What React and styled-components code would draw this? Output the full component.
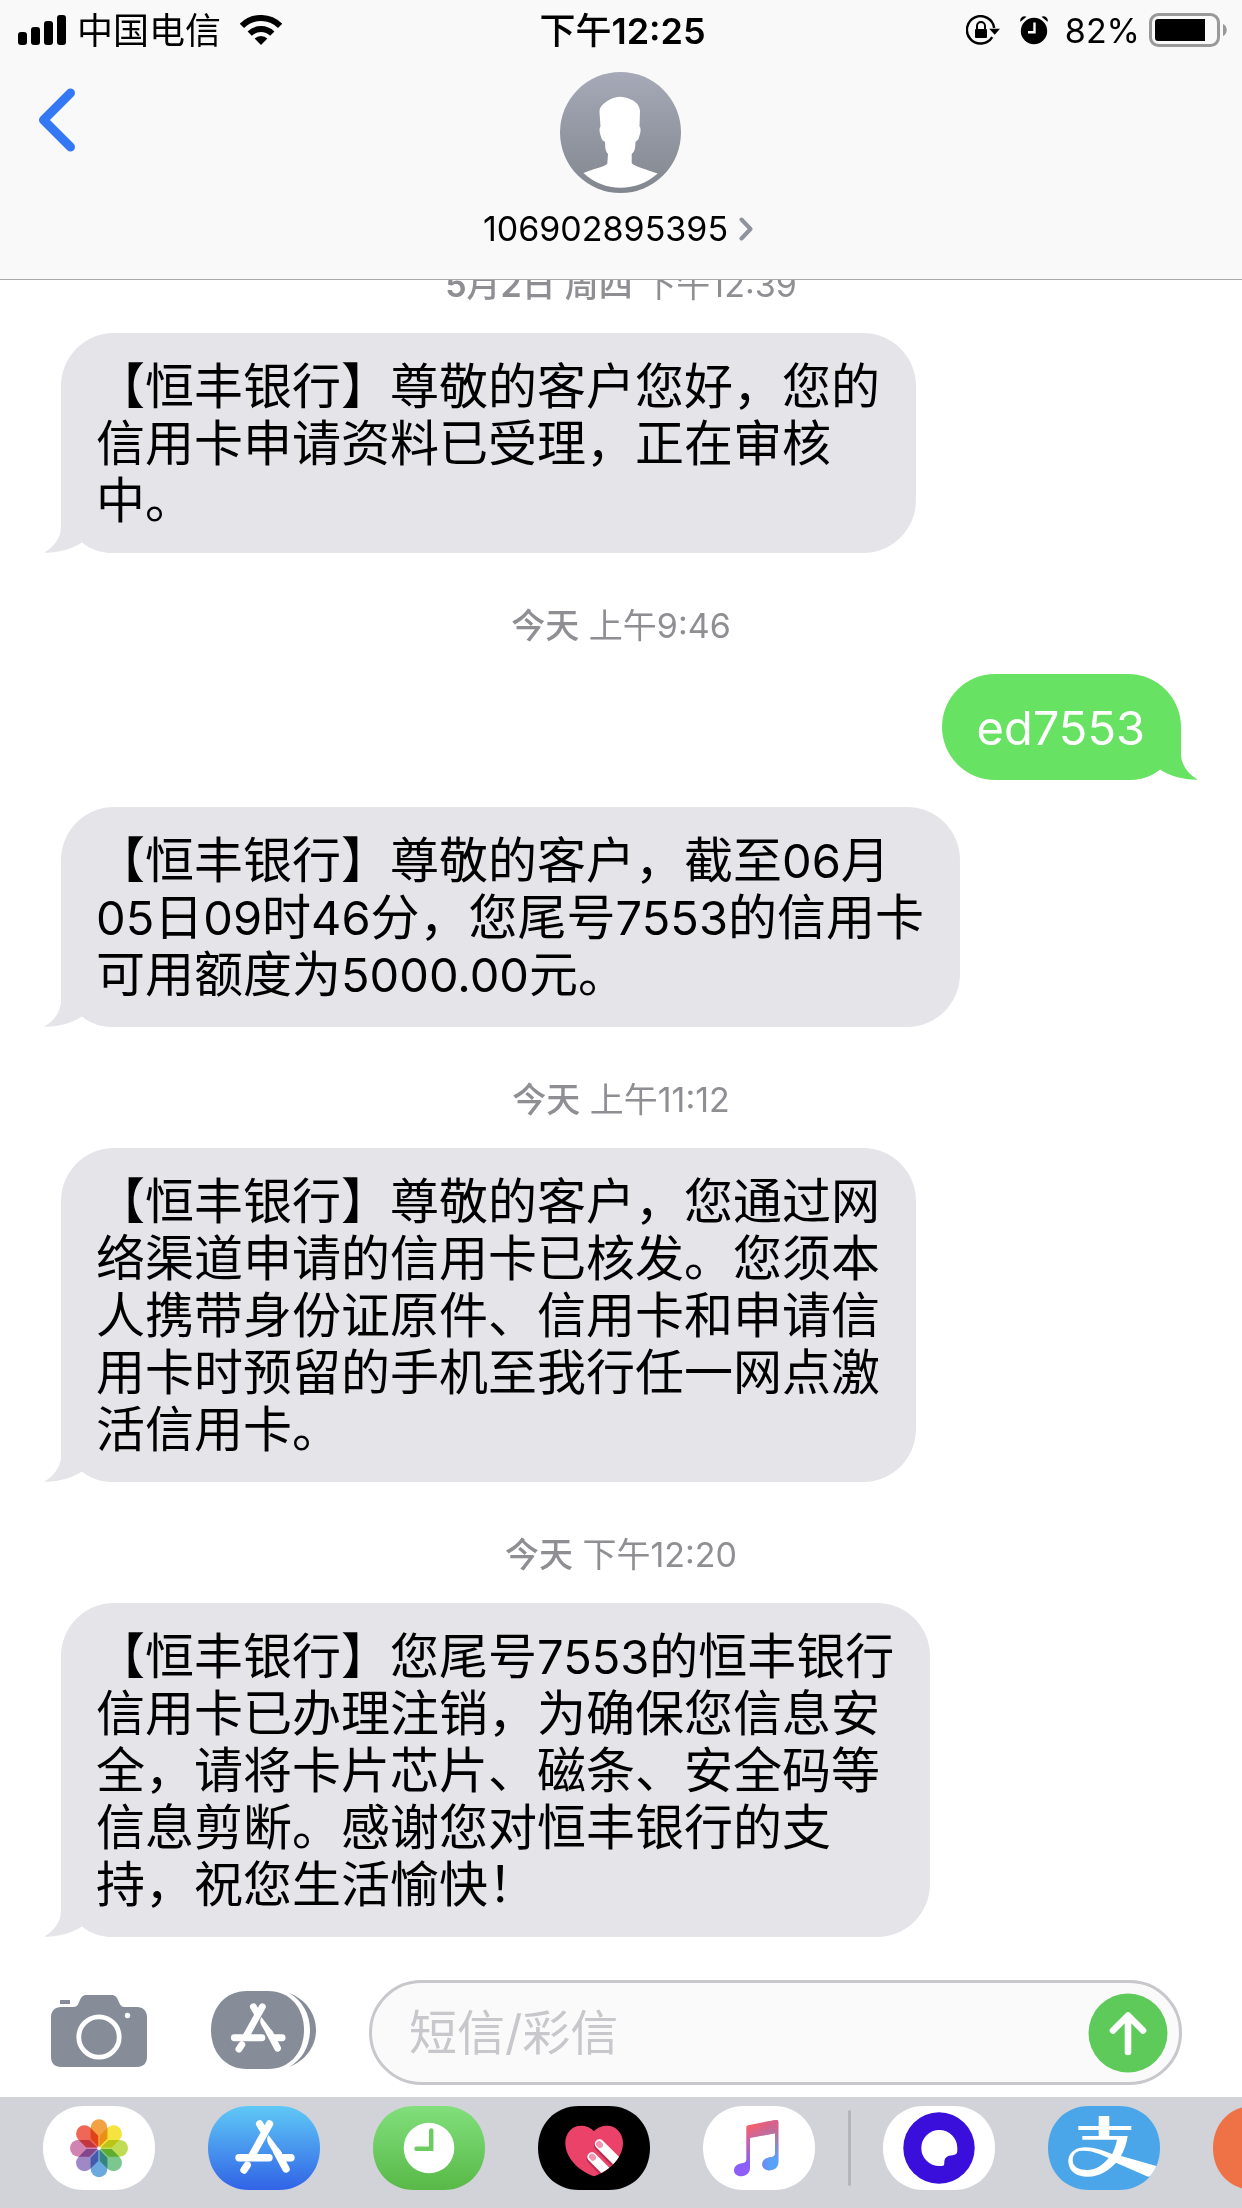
import React, { useState } from "react";
import styled, { createGlobalStyle } from "styled-components";

const items = [
  { type: "time", day: "5月2日 周四", time: "下午12:39" },
  {
    type: "in",
    lines: ["【恒丰银行】尊敬的客户您好，您的", "信用卡申请资料已受理，正在审核", "中。"],
  },
  { type: "time", day: "今天", time: "上午9:46" },
  { type: "out", lines: ["ed7553"] },
  {
    type: "in",
    lines: ["【恒丰银行】尊敬的客户，截至06月", "05日09时46分，您尾号7553的信用卡", "可用额度为5000.00元。"],
  },
  { type: "time", day: "今天", time: "上午11:12" },
  {
    type: "in",
    lines: [
      "【恒丰银行】尊敬的客户，您通过网",
      "络渠道申请的信用卡已核发。您须本",
      "人携带身份证原件、信用卡和申请信",
      "用卡时预留的手机至我行任一网点激",
      "活信用卡。",
    ],
  },
  { type: "time", day: "今天", time: "下午12:20" },
  {
    type: "in",
    lines: [
      "【恒丰银行】您尾号7553的恒丰银行",
      "信用卡已办理注销，为确保您信息安",
      "全，请将卡片芯片、磁条、安全码等",
      "信息剪断。感谢您对恒丰银行的支",
      "持，祝您生活愉快！",
    ],
  },
];

const GlobalStyle = createGlobalStyle`
  * { box-sizing: border-box; }
  body {
    margin: 0;
    background: #fff;
    color: #000;
    font-family: Inter, "Noto Sans CJK SC", sans-serif;
    text-spacing-trim: space-all;
  }
  button, input { font: inherit; color: inherit; }
  svg { display: block; flex: none; }
`;

const Screen = styled.div`
  display: flex;
  flex-direction: column;
  height: 100vh;
`;

const Header = styled.header`
  flex: none;
  background: #f9f9f9;
  border-bottom: 1px solid #a9a9ac;
  padding-bottom: 29px;
`;

const StatusBar = styled.div`
  display: grid;
  grid-template-columns: 1fr auto 1fr;
  align-items: center;
  height: 60px;
  padding: 0 15px 0 18px;
`;

const StatusSide = styled.div`
  display: flex;
  align-items: center;
  justify-content: ${(p) => (p.$end ? "flex-end" : "flex-start")};
  gap: ${(p) => (p.$end ? 9 : 11)}px;
`;

const StatusText = styled.span`
  padding-top: 2px;
  font-size: ${(p) => (p.$small ? 34 : 36)}px;
  line-height: 44px;
  font-weight: ${(p) => (p.$strong ? 500 : 400)};
`;

const Carrier = styled(StatusText)`
  margin-right: 8px;
`;

const StatusIcons = styled.span`
  display: flex;
  gap: 20px;
  margin-right: 8px;
`;

// digits and latin letters inside chinese text
const Latin = styled.span`
  font-size: ${(p) => (p.$size ? p.$size + "px" : "inherit")};
  font-weight: ${(p) => p.$weight || "inherit"};
`;

const Nav = styled.nav`
  display: grid;
  grid-template-columns: 1fr auto 1fr;
  align-items: start;
  padding: 12px 36px 0;
`;

const IconButton = styled.button`
  display: flex;
  flex: none;
  width: max-content;
  padding: 0;
  border: 0;
  background: none;
  cursor: pointer;
`;

const BackButton = styled(IconButton)`
  margin-top: 16px;
`;

const Contact = styled(IconButton)`
  flex-direction: column;
  align-items: center;
  gap: 15px;
`;

const ContactName = styled.span`
  display: flex;
  align-items: center;
  gap: 11px;
  padding-right: 6px;
  font-size: 34px;
  line-height: 42px;
`;

const Messages = styled.main`
  flex: 1;
  min-height: 0;
  display: flex;
  flex-direction: column;
  justify-content: flex-end;
  overflow: hidden;
  padding: 0 61px 26px;
`;

const TimeLabel = styled.div`
  flex: none;
  padding: 51px 0 26px;
  color: #8e8e93;
  font-size: 34px;
  line-height: 44px;
  text-align: center;
`;

const Day = styled.span`
  font-weight: 500;
`;

const Bubble = styled.div`
  position: relative;
  isolation: isolate;
  flex: none;
  align-self: ${(p) => (p.$out ? "flex-end" : "flex-start")};
  padding: 25px 36px 24px 35px;
  border-radius: 53px;
  background: ${(p) => (p.$out ? "#68e263" : "#e5e4e9")};
  color: ${(p) => (p.$out ? "#fff" : "#000")};
  font-size: 49px;
  line-height: 57px;
  white-space: pre;

  & + & {
    margin-top: 27px;
  }
`;

const Tail = styled.svg`
  position: absolute;
  z-index: -1;
  bottom: 0;
  ${(p) => (p.$out ? "right: -17px; transform: scaleX(-1);" : "left: -17px;")}
  fill: ${(p) => (p.$out ? "#68e263" : "#e5e4e9")};
`;

const Composer = styled.form`
  flex: none;
  display: flex;
  align-items: center;
  padding: 17px 60px 12px 51px;
`;

const ComposerButton = styled(IconButton)`
  margin-bottom: 4px;
`;

const AppsButton = styled(ComposerButton)`
  margin-left: 64px;
  margin-right: 53px;
`;

const Field = styled.div`
  flex: 1;
  min-width: 0;
  display: flex;
  align-items: center;
  height: 105px;
  padding: 0 11px 0 37px;
  border: 3px solid #c7c7cc;
  border-radius: 53px;
  background: #fafafa;
`;

const TextInput = styled.input`
  flex: 1;
  min-width: 0;
  padding: 0;
  border: 0;
  outline: 0;
  background: none;
  font-size: 48px;
  line-height: 60px;

  &::placeholder {
    color: #c7c7cc;
    opacity: 1;
  }
`;

const Dock = styled.footer`
  flex: none;
  display: flex;
  align-items: center;
  gap: 53px;
  overflow: hidden;
  padding: 9px 0 18px 43px;
  background: #d1d3d9;
`;

const Divider = styled.span`
  flex: none;
  width: 3px;
  height: 76px;
  margin: 0 -21px 0 -20px;
  border-radius: 2px;
  background: #b4b5ba;
`;

const PILL = "M41 0H71C95 0 112 18 112 42S95 84 71 84H41C17 84 0 66 0 42S17 0 41 0Z";

const SignalIcon = () => (
  <svg width="48" height="30" viewBox="0 0 48 30">
    <rect x="0" y="17" width="9" height="13" rx="3" />
    <rect x="13" y="12" width="9" height="18" rx="3" />
    <rect x="26" y="6" width="9" height="24" rx="3" />
    <rect x="39" y="0" width="9" height="30" rx="3" />
  </svg>
);

const WifiIcon = () => (
  <svg width="42" height="30" viewBox="0 0 42 30">
    <path d="M1.9 10.9A27 27 0 0 1 40.1 10.9M9.7 18.7A16 16 0 0 1 32.3 18.7" fill="none" stroke="#000" strokeWidth="6" />
    <path d="M21 30L14.6 23.6A9 9 0 0 1 27.4 23.6Z" />
  </svg>
);

const LockIcon = () => (
  <svg width="34" height="30" viewBox="0 0 34 30">
    <path d="M26.2 22.2A13.7 13.7 0 1 1 28.2 13" fill="none" stroke="#000" strokeWidth="2.4" />
    <path d="M23.2 13.8H34L28.7 19.8Z" />
    <rect x="9" y="14" width="12" height="9" rx="1" />
    <path d="M11 15V11A4 4 0 0 1 19 11V15" fill="none" stroke="#000" strokeWidth="2" />
  </svg>
);

const AlarmIcon = () => (
  <svg width="28" height="30" viewBox="0 0 28 30">
    <circle cx="14" cy="16" r="13.2" />
    <path d="M.5 6.8C-1 3 3.5 0 6.5 1.8ZM27.5 6.8C29 3 24.5 0 21.5 1.8Z" />
    <path d="M14.5 7.5V17.2H8" fill="none" stroke="#f9f9f9" strokeWidth="2.4" />
  </svg>
);

const BatteryIcon = () => (
  <svg width="78" height="34" viewBox="0 0 78 34">
    <rect x="1.5" y="1.5" width="68" height="31" rx="8" fill="none" stroke="#999" strokeWidth="3" />
    <path d="M9 6H56V28H9A3 3 0 0 1 6 25V9A3 3 0 0 1 9 6Z" />
    <path d="M74 11C79 13 79 21 74 23Z" fill="#999" />
  </svg>
);

const BackIcon = () => (
  <svg width="41" height="64" viewBox="0 0 41 64">
    <path d="M34.5 5L7.500 32L34.5 59" fill="none" stroke="#3478f6" strokeWidth="9" strokeLinecap="round" strokeLinejoin="round" />
  </svg>
);

const Avatar = () => (
  <svg width="121" height="121" viewBox="0 0 121 121">
    <defs>
      <linearGradient id="avatar" x1="0" y1="0" x2="0" y2="1">
        <stop offset="0" stopColor="#a6a9b7" />
        <stop offset="1" stopColor="#82878f" />
      </linearGradient>
    </defs>
    <circle cx="60.5" cy="60.5" r="60.5" fill="url(#avatar)" />
    <path
      fill="#fff"
      d="M60.5 24.7C65 24.9 70 26.5 73 28.5C77.5 31 79.7 35 80 39L79.5 54.5C81.5 56.5 80.5 61 78.5 67C77.5 69 76 68.5 75.5 70C75.3 74 75.5 79 71.7 82V91C73.5 94 85 97 97.7 101.5C87 111 74 115.7 60.5 115.7S34 111 23.5 101C36 96 46 94.5 47.3 91.5L48 82C44.5 78 45.5 74 45 70C44 68.5 43 69.5 42 67.5C40 62 38.5 57 40.5 54.5L39.5 40C39.3 35 43 31.5 49 28C52 26 56.5 24.6 60.5 24.7Z"
    />
  </svg>
);

const ChevronIcon = () => (
  <svg width="14" height="24" viewBox="0 0 14 24">
    <path d="M2.5 2.5L11.5 12L2.5 21.5" fill="none" stroke="#8e939d" strokeWidth="4" strokeLinecap="round" strokeLinejoin="round" />
  </svg>
);

const CameraIcon = () => (
  <svg width="96" height="72" viewBox="0 0 96 72">
    <g fill="#868d99">
      <path d="M10 12H22C27 12 27 9 29 5C30.5 1.5 32 0 36 0H60C64 0 65.5 1.5 67 5C69 9 69.5 12 73.5 12H86C92 12 96 16 96 22V62C96 68.5 92 72 86 72H10C4 72 0 68.5 0 62V22C0 16 4 12 10 12Z" />
      <rect x="9" y="5" width="10" height="4" />
    </g>
    <circle cx="48" cy="42" r="20.2" fill="none" stroke="#fff" strokeWidth="4.8" />
    <circle cx="76.5" cy="20.5" r="2.7" fill="#fff" />
  </svg>
);

const AppStoreMark = () => (
  <g fill="none" stroke="#fff" strokeWidth="7.4" strokeLinecap="round">
    <path d="M61.5 18L44 49.5M51.7 18L55.5 24.5M39.2 59.2L36 64" />
    <path d="M31 51.7H61M74 51.7H83" />
    <path d="M69 46L78 63" />
    <path d="M60.5 29C58.5 32 58.8 35 60.5 38.3L68 51L74 47Z" fill="#fff" stroke="none" />
  </g>
);

const AppsIcon = () => (
  <svg width="105" height="79" viewBox="0 0 105 79">
    <g fill="#868d99">
      <path d="M36 0H57C79 0 93 17 93 39S79 78 57 78H36C14 78 0 61 0 39S14 0 36 0Z" />
      <path d="M78 2C94 8 105 22 105 39S94 70 78 76C91 69 99 55 99 39S91 9 78 2Z" />
    </g>
    <g transform="translate(-5.2 -.8) scale(.92)">
      <AppStoreMark />
    </g>
  </svg>
);

const SendIcon = () => (
  <svg width="80" height="80" viewBox="0 0 80 80">
    <circle cx="40" cy="40" r="39.5" fill="#5dca5a" />
    <path d="M40 59V23M25 37.5L40 22.5L55 37.5" fill="none" stroke="#fff" strokeWidth="6.6" strokeLinecap="round" strokeLinejoin="round" />
  </svg>
);

const AppIcon = ({ children, ...props }) => (
  <svg width="112" height="84" viewBox="0 0 112 84">
    <path d={PILL} {...props} />
    {children}
  </svg>
);

const petals = ["#f2a143", "#f6e340", "#c0dc55", "#7cc78f", "#6ca9de", "#9f88c6", "#d184b2", "#ee6757"];

const Petal = styled.path`
  mix-blend-mode: multiply;
`;

const PhotosIcon = () => (
  <AppIcon fill="#fff">
    <g transform="translate(56 42.3)">
      {petals.map((color, i) => (
        <Petal
          key={color}
          d="M0 -1L-8.4 -9.5V-20.6A8.4 8.4 0 0 1 8.4 -20.6V-9.5Z"
          fill={color}
          transform={`rotate(${i * 45})`}
        />
      ))}
    </g>
    <circle cx="56" cy="42.3" r="1.8" fill="#fff" />
  </AppIcon>
);

const StoreIcon = () => (
  <AppIcon fill="url(#store)">
    <defs>
      <linearGradient id="store" x1="0" y1="0" x2="0" y2="1">
        <stop offset="0" stopColor="#5fc9f6" />
        <stop offset="1" stopColor="#3163e6" />
      </linearGradient>
    </defs>
    <AppStoreMark />
  </AppIcon>
);

const RecentIcon = () => (
  <AppIcon fill="url(#recent)">
    <defs>
      <linearGradient id="recent" x1="0" y1="0" x2="0" y2="1">
        <stop offset="0" stopColor="#82df7c" />
        <stop offset="1" stopColor="#58b947" />
      </linearGradient>
    </defs>
    <circle cx="56" cy="42" r="25.3" fill="#fff" />
    <path d="M58.2 24.5V42.8H43.5" fill="none" stroke="#6ccc62" strokeWidth="4.5" strokeLinecap="round" />
  </AppIcon>
);

const HEART =
  "M56 25.3C60 21 64 19.7 69 19.7C78 19.7 85 27 85 37C85 52 71 65 56 70.3C41 65 27.3 52 27.3 37C27.3 27 34 19.7 43 19.7C48 19.7 52 21 56 25.3Z";

const TouchIcon = () => (
  <AppIcon fill="#000">
    <clipPath id="heart">
      <path d={HEART} />
    </clipPath>
    <path d={HEART} fill="#eb4269" />
    <g clipPath="url(#heart)" fill="none" strokeLinecap="round">
      <path d="M60.5 40L84 64M53 53L74 75" stroke="#b92d50" strokeWidth="9" />
      <path d="M61.5 38L86 62.5M54 51L76 73" stroke="#fff" strokeWidth="9.5" />
      <path d="M61 38L62 39M54 50.7L55 51.7" stroke="#f295b1" strokeWidth="6" />
    </g>
  </AppIcon>
);

const NOTE =
  "M43.3 21.5Q43.3 19.7 45 19.2L73 14Q75.3 13.6 75.3 15.5V56C75.3 61 71.5 64 67 64.3C62 64.5 59.3 61.8 59.3 58.5C59.3 55 61.5 52.5 66 51.5L70 50.7Q72 50.3 72 48V27.3L47 32V62C47 67 43 70 38.7 70.3C34 70.5 31 67.8 31 64.5C31 61 33.5 58.5 37.5 57.5L41 56.7Q43.3 56.2 43.3 54Z";

const MusicIcon = () => (
  <AppIcon fill="#fff">
    <defs>
      <linearGradient id="noteLeft" x1="0" y1="0" x2="0" y2="1">
        <stop offset=".1" stopColor="#fb6067" />
        <stop offset=".75" stopColor="#8d5ff8" />
      </linearGradient>
      <linearGradient id="noteRight" x1="0" y1="0" x2="0" y2="1">
        <stop offset=".1" stopColor="#d4628c" />
        <stop offset=".7" stopColor="#57a3f8" />
      </linearGradient>
      <linearGradient id="fade">
        <stop offset=".3" stopColor="#000" />
        <stop offset=".8" stopColor="#fff" />
      </linearGradient>
      <mask id="noteMask">
        <rect x="31" y="10" width="46" height="64" fill="url(#fade)" />
      </mask>
    </defs>
    <path d={NOTE} fill="url(#noteLeft)" />
    <path d={NOTE} fill="url(#noteRight)" mask="url(#noteMask)" />
  </AppIcon>
);

const QuarkIcon = () => (
  <AppIcon fill="#fff">
    <circle cx="56" cy="42" r="35.7" fill="#3a0fdb" />
    <path d="M74.3 42V44.5C74.3 48 72.3 49 69.5 49.2C64.5 49.5 61.3 51.5 61.3 56.5C61.3 59 61 60 58.5 60H56.3A18 18 0 1 1 74.3 42Z" fill="#fff" />
  </AppIcon>
);

const AlipayIcon = () => (
  <AppIcon fill="#4ba6e9">
    <clipPath id="pill">
      <path d={PILL} />
    </clipPath>
    <g fill="#fff" clipPath="url(#pill)">
      <path d="M50.7 10H61.3V20H83.3V24H61.3V30H79.7C78.5 38 76 45 72.3 51L64 48.5C66 44 68 39 69 33.7H34.3V30H50.7V24H30.3V20H50.7Z" />
      <path
        fillRule="evenodd"
        d="M108.3 60L72.3 49.7L64 48C53 43 40 39.5 31 42C23 44.5 20.3 50 20.3 55.7C21 66 29 70.7 39.7 70.7C52 70.7 61 64 68 56.7L100 70.7L112 68ZM60.7 52C54 60 47 64 39.7 64C31 64 24.7 61 24.7 54.5C24.7 49 27.5 45.5 32 45C41 43.5 51 47.5 60.7 52Z"
      />
    </g>
  </AppIcon>
);

const dockApps = [
  { name: "照片", Icon: PhotosIcon },
  { name: "App Store", Icon: StoreIcon },
  { name: "最近使用", Icon: RecentIcon },
  { name: "Digital Touch", Icon: TouchIcon },
  { name: "音乐", Icon: MusicIcon },
];

const moreApps = [
  { name: "夸克", Icon: QuarkIcon },
  { name: "支付宝", Icon: AlipayIcon },
  { name: "更多", Icon: () => <AppIcon fill="#ee7246" /> },
];

const renderApp = ({ name, Icon }) => (
  <IconButton key={name} type="button" aria-label={name}>
    <Icon />
  </IconButton>
);

const Mixed = ({ text, size, weight }) =>
  text.split(/([\w.:]+)/).map((part, i) =>
    i % 2 ? (
      <Latin key={i} $size={size} $weight={weight}>
        {part}
      </Latin>
    ) : (
      part
    )
  );

const Message = ({ item }) => {
  if (item.type === "time") {
    return (
      <TimeLabel>
        <Day>
          <Mixed text={item.day} weight={600} />
        </Day>{" "}
        {item.time}
      </TimeLabel>
    );
  }
  const out = item.type === "out";
  return (
    <Bubble $out={out}>
      <Mixed text={item.lines.join("\n")} size={47} />
      <Tail $out={out} width="70" height="53" viewBox="0 0 70 53" aria-hidden="true">
        <path d="M17 0V27C17 38 9 48 0 52.6C14 53 28 49 38 42.5C46 49 56 53 70 53V0Z" />
      </Tail>
    </Bubble>
  );
};

const App = () => {
  const [text, setText] = useState("");

  return (
    <Screen>
      <GlobalStyle />
      <Header>
        <StatusBar>
          <StatusSide>
            <SignalIcon />
            <Carrier>中国电信</Carrier>
            <WifiIcon />
          </StatusSide>
          <StatusText as="time" $strong>
            <Mixed text="下午12:25" weight={600} />
          </StatusText>
          <StatusSide $end>
            <StatusIcons>
              <LockIcon />
              <AlarmIcon />
            </StatusIcons>
            <StatusText $small>82%</StatusText>
            <BatteryIcon />
          </StatusSide>
        </StatusBar>
        <Nav>
          <BackButton type="button" aria-label="返回">
            <BackIcon />
          </BackButton>
          <Contact type="button">
            <Avatar />
            <ContactName>
              106902895395
              <ChevronIcon />
            </ContactName>
          </Contact>
        </Nav>
      </Header>

      <Messages>
        {items.map((item, i) => (
          <Message key={i} item={item} />
        ))}
      </Messages>

      <Composer onSubmit={(e) => e.preventDefault()}>
        <ComposerButton type="button" aria-label="相机">
          <CameraIcon />
        </ComposerButton>
        <AppsButton type="button" aria-label="应用">
          <AppsIcon />
        </AppsButton>
        <Field>
          <TextInput
            type="text"
            aria-label="短信/彩信"
            placeholder="短信/彩信"
            value={text}
            onChange={(e) => setText(e.target.value)}
          />
          <IconButton type="submit" aria-label="发送">
            <SendIcon />
          </IconButton>
        </Field>
      </Composer>

      <Dock>
        {dockApps.map(renderApp)}
        <Divider />
        {moreApps.map(renderApp)}
      </Dock>
    </Screen>
  );
};

export default App;
